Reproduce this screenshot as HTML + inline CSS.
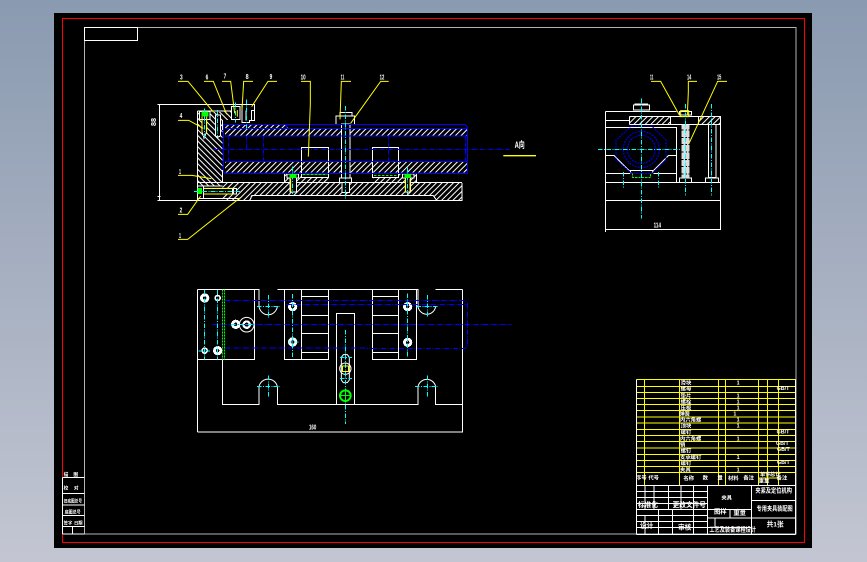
<!DOCTYPE html>
<html><head><meta charset="utf-8">
<style>
html,body{margin:0;padding:0;width:867px;height:562px;overflow:hidden;background:linear-gradient(180deg,#8a9ab0 0%,#c3c6d2 100%)}
svg{position:absolute;left:0;top:0;display:block}
text{font-family:"Liberation Sans","Noto Sans CJK SC",sans-serif;fill:#fff}
.n{font-size:23px;font-weight:bold}
</style></head><body>
<svg width="867" height="562" viewBox="0 0 867 562" xmlns="http://www.w3.org/2000/svg" fill="none">
<defs>
<pattern id="h" width="12" height="12" patternUnits="userSpaceOnUse" patternTransform="rotate(45)"><rect width="12" height="12" fill="#000" shape-rendering="crispEdges"/><rect width="12" height="3.6" fill="#fff" shape-rendering="crispEdges"/></pattern>
<pattern id="h2" width="12" height="12" patternUnits="userSpaceOnUse" patternTransform="rotate(-45)"><rect width="12" height="12" fill="#000" shape-rendering="crispEdges"/><rect width="12" height="3.6" fill="#fff" shape-rendering="crispEdges"/></pattern>
</defs>
<rect x="54" y="13" width="758" height="535" fill="#000"/>
<g shape-rendering="crispEdges">
<rect x="62.5" y="18.5" width="742" height="524" stroke="#f00"/>
<rect x="84.5" y="27.5" width="711.5" height="506.5" stroke="#b4b4b4"/>
<rect x="84.5" y="27.5" width="53" height="13" stroke="#fff"/>
</g>

<!-- SECTION VIEW -->
<g transform="translate(140,60) scale(.33333)" stroke-width="3" shape-rendering="crispEdges">
 <path fill="url(#h)" d="M172 156H248V240L248 330V378H172Z"/>
 <path fill="url(#h2)" d="M248 367H966V421H888L880 407H340L328 421H248Z"/>
 <path fill="url(#h2)" d="M255 195H438L445 205H982V228H255Z"/>
 <path fill="url(#h2)" d="M255 305H982V338H255Z"/>
 <rect x="241" y="155" width="40" height="25" fill="url(#h)"/>
 <rect x="484" y="338" width="82" height="16" fill="#000"/>
 <rect x="697" y="338" width="79" height="16" fill="#000"/>
 <path fill="url(#h2)" d="M433 340H484V367H433ZM776 340H830V367H776ZM700 352H776V367H700ZM484 352H566V367H484Z"/>
 <g stroke="#fff">
  <path d="M52 133H345M52 421H966V369M172 367H966M58 133V421M52 410H62"/>
  <path d="M172 153V421M172 153H300M248 180V210M248 330V367M172 378H248M178 402H248M172 415H300"/>
  <path d="M330 421L335 407H880L890 421"/>
  <rect x="484" y="262" width="82" height="90"/>
  <rect x="697" y="262" width="79" height="90"/>
  <path d="M433 340V367M433 340H484M776 340H830V367M484 352H566M700 352H776"/>
  <rect x="604" y="192" width="26" height="165" fill="#000"/>
  <path d="M588 193V168H600V158H636V168H644V193ZM588 193H644M600 168H636"/>
  <rect x="599" y="354" width="36" height="14" fill="#000"/>
  <rect x="606" y="368" width="22" height="30" fill="#000"/>
  <path d="M226 165H241V228L233 232L226 228Z" fill="#000"/>
  <path d="M178 155H210V178H178ZM186 178V215L192 235L200 215V178" fill="#000"/>
  <path d="M172 378H190V415H172ZM190 385H280V402H190ZM278 385H290V402H278Z" fill="#000"/>
  <path d="M274 140H300V178H274ZM306 134H344V152H334V182H328V188H306ZM318 152V182M344 152V182H334" fill="#000"/>
  <path d="M441 342H476V354H469V396H450V354H441Z" fill="#000"/>
  <path d="M787 342H822V354H812V396H796V354H787Z" fill="#000"/>
 </g>
 <g stroke="#00f">
  <path d="M250 193H975L982 200V340H255L250 335V193ZM255 205H982M255 228H982M255 305H982M440 195V205"/>
  <path d="M266 228V305M370 228V305M745 228V305M976 228V305" stroke-dasharray="10 4 3 4"/>
  <path d="M220 268H1110M320 228V268" stroke-dasharray="14 4 3 4"/>
 </g>
 <g stroke="#0ff">
  <path d="M193 145V235M233 150V230M286 128V188M320 118V205M617 138V416M458 320V402M802 322V404M162 394H300" stroke-dasharray="14 4 3 4"/>
 </g>
 <g stroke="#0f0">
  <rect x="186" y="156" width="18" height="12" fill="#0f0"/>
  <rect x="174" y="386" width="11" height="14" fill="#0f0"/>
  <rect x="450" y="343" width="18" height="10" fill="#0f0"/>
  <rect x="795" y="344" width="16" height="9" fill="#0f0"/>
  <path d="M488 343H562M702 347H772" stroke-dasharray="8 4"/>
 </g>
 <g stroke="#ff0" shape-rendering="auto">
  <path d="M114 64H144L220 156M192 64H220L260 163M246 64H272L284 160M339 64H311L306 150M411 64H384L335 140M483 64H511V132L505 290M633 64H604L600 178M746 64H722L632 190"/>
  <path d="M114 181H146L190 205M114 346H156L214 356M114 463H143L182 408M114 538H143L302 412"/>
  <path d="M186 170V218M200 170V218M192 385H280M192 402H280M452 356V396M796 356V396M810 356V396M292 150V170"/>
  <path d="M1090 287H1188" stroke-width="4"/>
 </g>
 <g class="n">
  <text x="120" y="58" textLength="8" lengthAdjust="spacingAndGlyphs">3</text><text x="197" y="58" textLength="8" lengthAdjust="spacingAndGlyphs">6</text><text x="251" y="55" textLength="8" lengthAdjust="spacingAndGlyphs">7</text><text x="317" y="57" textLength="9" lengthAdjust="spacingAndGlyphs">8</text><text x="389" y="57" textLength="8" lengthAdjust="spacingAndGlyphs">9</text>
  <text x="482" y="58" textLength="15" lengthAdjust="spacingAndGlyphs">10</text><text x="602" y="58" textLength="11" lengthAdjust="spacingAndGlyphs">11</text><text x="719" y="58" textLength="14" lengthAdjust="spacingAndGlyphs">12</text>
  <text x="119" y="174" textLength="8" lengthAdjust="spacingAndGlyphs">4</text><text x="117" y="342" textLength="6" lengthAdjust="spacingAndGlyphs">1</text><text x="119" y="458" textLength="8" lengthAdjust="spacingAndGlyphs">2</text><text x="117" y="534" textLength="6" lengthAdjust="spacingAndGlyphs">1</text>
  <text x="1124" y="264" textLength="30" lengthAdjust="spacingAndGlyphs" style="font-size:27px">A向</text>
  <text transform="translate(48,198) rotate(-90)" textLength="24" lengthAdjust="spacingAndGlyphs">88</text>
 </g>
</g>

<!-- SIDE VIEW -->
<g transform="translate(590,60) scale(.33333)" stroke-width="3" shape-rendering="crispEdges">
 <rect x="118" y="169" width="124" height="25" fill="url(#h2)"/>
 <rect x="326" y="169" width="66" height="23" fill="url(#h2)"/>
 <g stroke="#fff">
  <path d="M46 155V516M46 155H260M46 181H118M46 203H260V367M118 169H392V367M118 194H392M118 169V194M242 169V194M326 169V194M46 367H392M46 421H392M46 508H392V367"/>
  <path d="M46 286H72L118 332H190L236 286H260M46 340H120M190 340H260M120 332L124 340M190 332L186 340"/>
  <path d="M130 135H178V150H130ZM134 132H174"/>
  <rect x="355" y="194" width="23" height="158"/>
  <path d="M346 367V354H385V367M268 367V354H305V367M268 165H305V155H268Z"/>
 </g>
 <rect x="274" y="194" width="25" height="160" fill="#ddd"/>
 <path d="M274 210H299M274 232H299M274 254H299M274 276H299M274 298H299M274 320H299M274 342H299" stroke="#000" stroke-width="3" stroke-dasharray="6 5"/>
 <g stroke="#00f" shape-rendering="auto" stroke-dasharray="6 3">
  <path d="M125 198H185L228 240V298L185 340H125L78 298V240Z"/>
  <circle cx="154" cy="268" r="54"/><circle cx="154" cy="268" r="42"/>
 </g>
 <path d="M127 340V352H182V340" stroke="#0f0" stroke-dasharray="7 3"/>
 <g stroke="#0ff" stroke-dasharray="14 4 3 4">
  <path d="M24 268H270M154 115V476M100 336V386M205 336V384M286 132V408M364 132V408"/>
 </g>
 <g stroke="#ff0" shape-rendering="auto">
  <path d="M183 64H212L268 165M321 64H295V96L292 165M411 64H383L298 248"/>
  <path d="M272 152H296V170H272Z"/>
 </g>
 <g class="n">
  <text x="180" y="58" textLength="10" lengthAdjust="spacingAndGlyphs">11</text>
  <text x="291" y="58" textLength="13" lengthAdjust="spacingAndGlyphs">14</text>
  <text x="381" y="58" textLength="13" lengthAdjust="spacingAndGlyphs">15</text>
  <text x="191" y="502" textLength="22" lengthAdjust="spacingAndGlyphs">114</text>
 </g>
</g>

<!-- PLAN VIEW -->
<g transform="translate(190,280) scale(.33333)" stroke-width="3" shape-rendering="crispEdges">
 <g stroke="#fff">
  <path d="M22 28V456M22 456H818V28M22 28H207V80M262 28H684V80M737 28H818M22 238H194V28M97 238V374H207V320M262 320V374H684V320M737 320V374H818"/>
  <path d="M283 28V238H416V28M334 28V238M334 49H416M334 106H416M334 160H416M334 217H416"/>
  <path d="M547 28V238H680V28M625 28V238M547 49H625M547 106H625M547 160H625M547 217H625"/>
  <path d="M439 374V100H494V374"/>
  <path shape-rendering="auto" d="M207 80A28 30 0 0 0 262 80M684 80A27 28 0 0 0 737 80M207 320A28 28 0 0 1 262 320M684 320A27 27 0 0 1 737 320"/>
  <path shape-rendering="auto" d="M454 232L460 224H472L478 232V300L472 308H460L454 300Z"/>
  <g shape-rendering="auto">
  <circle cx="170" cy="134" r="22"/>
  <circle cx="466" cy="266" r="17"/>
  </g>
 </g>
 <g fill="#fff" stroke="none">
  <circle cx="44" cy="54" r="14"/><circle cx="83" cy="54" r="10"/><circle cx="44" cy="212" r="10"/><circle cx="83" cy="212" r="14"/><circle cx="137" cy="133" r="14"/><circle cx="170" cy="134" r="13"/>
  <circle cx="308" cy="80" r="14"/><circle cx="308" cy="186" r="14"/><circle cx="653" cy="80" r="14"/><circle cx="653" cy="187" r="14"/>
 </g>
 <g fill="#000" stroke="none">
  <circle cx="44" cy="54" r="5"/><circle cx="83" cy="54" r="5"/><circle cx="44" cy="212" r="5"/><circle cx="83" cy="212" r="5"/><circle cx="137" cy="133" r="5"/><circle cx="170" cy="134" r="6"/>
  <circle cx="308" cy="80" r="5"/><circle cx="308" cy="186" r="5"/><circle cx="653" cy="80" r="5"/><circle cx="653" cy="187" r="5"/>
 </g>
 <g stroke="#00f">
  <path d="M105 62H825L833 70V198L825 206H530M105 204H525M290 74H833M68 133H965" stroke-dasharray="16 4 3 4"/>
 </g>
 <path d="M97 28V238M104 28V238" stroke="#0f0" stroke-dasharray="6 3"/>
 <g stroke="#0ff" stroke-dasharray="14 4 3 4">
  <path d="M44 30V238M83 30V238M308 42V232M653 40V232M236 45V114M201 79H270M713 45V112M679 79H747M236 286V354M201 319H270M713 286V354M675 319H744M466 150V432M450 232H486M450 296H486M26 213H60M123 133H195M295 186H326"/>
 </g>
 <circle cx="466" cy="347" r="16" stroke="#0f0" stroke-width="6" shape-rendering="auto"/>
 <path d="M450 347H482M466 332V362" stroke="#0f0"/>
 <rect x="457" y="258" width="18" height="16" stroke="#ff0"/>
 <text x="357" y="449" class="n" textLength="22" lengthAdjust="spacingAndGlyphs">160</text>
</g>

<!-- TITLE TABLE -->
<g transform="translate(630,372) scale(.33333)" stroke-width="3" shape-rendering="crispEdges">
 <g stroke="#ff0">
  <path d="M20 22H496M20 43H496M20 61H496M20 80H496M20 98H496M20 116H496M20 135H496M20 153H496M20 172H496M20 190H496M20 209H496M20 228H496M20 247H496M20 265H496M20 283H496M20 301H496"/>
  <path d="M43 22V340M148 22V340M265 22V340M286 22V340M385 22V340M412 22V340M445 22V340"/>
  <path d="M385 318H445"/>
 </g>
 <g stroke="#fff">
  <path d="M20 22V487M496 22V487"/>
  <path d="M20 340H496M20 358H233M20 376H233M20 394H233M20 412H233M20 430H233M20 448H233M20 466H233M20 487H496"/>
  <path d="M45 340V412M72 340V412M115 340V412M153 340V412M190 340V412M45 430V487M85 412V487M128 412V487M233 340V487M365 340V487M190 412V487"/>
  <path d="M365 385H496M233 412H365M233 438H496M233 466H365M255 438V466M300 412V438"/>
 </g>
 <g style="font-size:16px;font-weight:bold">
  <text x="152" y="37">滑块</text><text x="152" y="56">螺母</text><text x="152" y="76">垫片</text><text x="152" y="94">螺栓</text><text x="152" y="112">压板</text><text x="148" y="130">弹簧</text><text x="150" y="149">内六角螺</text><text x="152" y="167">顶块</text><text x="152" y="186">螺钉</text><text x="150" y="205">内六角螺</text><text x="150" y="224">销</text><text x="152" y="242">螺钉</text><text x="150" y="261">支承螺钉</text><text x="152" y="279">螺钉</text><text x="150" y="298">夹具</text>
  <text x="320" y="37">1</text><text x="320" y="76">1</text><text x="320" y="94">1</text><text x="320" y="112">1</text><text x="310" y="130">1</text><text x="320" y="149">1</text><text x="320" y="167">1</text><text x="320" y="205">1</text><text x="320" y="261">1</text><text x="320" y="298">1</text>
  <text x="440" y="54">GB/T</text><text x="440" y="184">GB/T</text><text x="438" y="219">GB/T</text><text x="441" y="237">GB/T</text><text x="441" y="276">GB/T</text>
  <text x="18" y="322">序号</text><text x="55" y="322">代号</text><text x="160" y="324">名称</text><text x="218" y="323">数</text><text x="262" y="323">量</text><text x="294" y="324">材料</text><text x="340" y="323">备注</text><text x="440" y="323">备注</text>
  <text x="390" y="312">单件</text><text x="420" y="312">总计</text><text x="386" y="332">重量</text>
  <text x="274" y="382">夹具</text>
  <text x="24" y="405" style="font-size:20px">标准化</text><text x="128" y="405" style="font-size:20px">更改文件号</text>
  <text x="30" y="468" style="font-size:20px">设计</text><text x="144" y="473" style="font-size:20px">审核</text>
  <text x="252" y="425" style="font-size:19px">图样</text><text x="310" y="427" style="font-size:19px">重量</text>
  <text x="238" y="478" style="font-size:19px" textLength="140" lengthAdjust="spacingAndGlyphs">工艺及装备课程设计</text>
  <text x="376" y="362" style="font-size:19px" textLength="110" lengthAdjust="spacingAndGlyphs">夹紧及定位机构</text>
  <text x="380" y="416" style="font-size:19px" textLength="108" lengthAdjust="spacingAndGlyphs">专用夹具装配图</text>
  <text x="410" y="463" style="font-size:20px">共1张</text>
 </g>
</g>

<!-- LEFT BLOCK -->
<g transform="translate(50,465) scale(.33333)" stroke-width="3" shape-rendering="crispEdges">
 <path d="M37 37V207M37 37H103M37 85H103M37 120H103M37 152H103M37 184H103M37 207H103M67 184V207" stroke="#fff"/>
 <g style="font-size:14px;font-weight:bold">
  <text x="41" y="33">描</text><text x="70" y="33">图</text><text x="41" y="73">校</text><text x="72" y="73">对</text>
  <text x="41" y="112" textLength="55" lengthAdjust="spacingAndGlyphs">旧底图总号</text>
  <text x="44" y="145" textLength="48" lengthAdjust="spacingAndGlyphs">底图总号</text>
  <text x="41" y="178" style="font-size:13px">签字</text><text x="72" y="178" style="font-size:13px">日期</text>
 </g>
</g>
</svg>
</body></html>
